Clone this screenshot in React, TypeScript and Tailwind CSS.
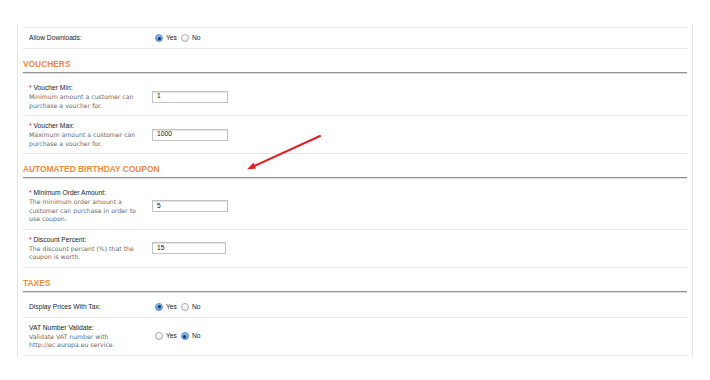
import React from 'react';

type Field =
  | { kind: 'radio'; label: string; desc?: string[]; value: 'yes' | 'no'; required?: boolean }
  | { kind: 'input'; label: string; desc: string[]; value: string; narrow?: boolean; required?: boolean };

const sections: { title?: string; fields: Field[] }[] = [
  {
    fields: [{ kind: 'radio', label: 'Allow Downloads:', value: 'yes' }],
  },
  {
    title: 'Vouchers',
    fields: [
      {
        kind: 'input',
        required: true,
        label: 'Voucher Min:',
        desc: ['Minimum amount a customer can', 'purchase a voucher for.'],
        value: '1',
      },
      {
        kind: 'input',
        required: true,
        label: 'Voucher Max:',
        desc: ['Maximum amount a customer can', 'purchase a voucher for.'],
        value: '1000',
      },
    ],
  },
  {
    title: 'Automated Birthday Coupon',
    fields: [
      {
        kind: 'input',
        required: true,
        label: 'Minimum Order Amount:',
        desc: ['The minimum order amount a', 'customer can purchase in order to', 'use coupon.'],
        value: '5',
      },
      {
        kind: 'input',
        required: true,
        label: 'Discount Percent:',
        desc: ['The discount percent (%) that the', 'coupon is worth.'],
        value: '15',
        narrow: true,
      },
    ],
  },
  {
    title: 'Taxes',
    fields: [
      { kind: 'radio', label: 'Display Prices With Tax:', value: 'yes' },
      {
        kind: 'radio',
        label: 'VAT Number Validate:',
        desc: ['Validate VAT number with', 'http://ec.europa.eu service.'],
        value: 'no',
      },
    ],
  },
];

function Radio({ checked }: { checked: boolean }) {
  return checked ? (
    <span className="w-[8px] h-[8px] rounded-full border border-[#5a8fd0] bg-gradient-to-b from-[#9cc4f2] to-[#4f8fe0] flex items-center justify-center shrink-0">
      <span className="w-[3px] h-[3px] rounded-full bg-[#1d2f4f]" />
    </span>
  ) : (
    <span className="block w-[8px] h-[8px] rounded-full border border-[#aaaaaa] bg-gradient-to-b from-[#ffffff] to-[#e9e9e9] shrink-0" />
  );
}

function FieldRow({ field }: { field: Field }) {
  return (
    <div className="flex items-center border-b border-[#e6e6e6] pl-[6px] py-[5px] min-h-[20px]">
      <div className="w-[123px] shrink-0">
        <div className="text-[6.7px] leading-[10px] text-[#222]">
          {field.required && <span className="text-[#d02020]">* </span>}
          {field.label}
        </div>
        {field.desc && (
          <div className="text-[6.2px] leading-[8.5px] text-[#6a6a6a] font-['DejaVu_Sans',sans-serif]">
            {field.desc.map((line) => (
              <div key={line}>{line}</div>
            ))}
          </div>
        )}
      </div>
      {field.kind === 'input' ? (
        <div
          className={`h-[12px] border border-[#c2c2c2] shadow-[inset_0_1px_1px_rgba(0,0,0,0.12)] flex items-center pl-[4px] text-[6.7px] text-[#111] ${
            field.narrow ? 'w-[74px]' : 'w-[76px]'
          }`}
        >
          {field.value}
        </div>
      ) : (
        <div className="flex items-center pl-[3px] text-[6.7px] leading-[10px] text-[#222]">
          <Radio checked={field.value === 'yes'} />
          <span className="ml-[3px]">Yes</span>
          <span className="ml-[4px] flex">
            <Radio checked={field.value === 'no'} />
          </span>
          <span className="ml-[3px]">No</span>
        </div>
      )}
    </div>
  );
}

export default function App() {
  return (
    <div className="relative w-[710px] h-[380px] bg-white pt-[24px] font-['Liberation_Sans',Arial,sans-serif] overflow-hidden">
      <div className="ml-[17px] w-[676px] border-x border-[#e4e4e4] px-[5px] pt-[3px] pb-[1px]">
        <div className="border-t border-[#e6e6e6]">
          {sections.map((section, i) => (
            <div key={i}>
              {section.title && (
                <div className="pt-[10px] pb-[2px] mb-[5px] border-b border-[#949494] shadow-[0_1px_0_#dcdcdc] text-[8.4px] leading-[11px] font-bold uppercase text-[#f38a3c]">
                  {section.title}
                </div>
              )}
              {section.fields.map((field) => (
                <FieldRow key={field.label} field={field} />
              ))}
            </div>
          ))}
        </div>
      </div>

      {/* red annotation arrow */}
      <svg className="absolute left-0 top-0 pointer-events-none" width="710" height="380">
        <line x1="320" y1="136" x2="253" y2="166.5" stroke="#e02222" strokeWidth="2" strokeLinecap="round" />
        <polygon points="247,169.5 253.5,162.5 256,168.5" fill="#e02222" />
      </svg>
    </div>
  );
}
